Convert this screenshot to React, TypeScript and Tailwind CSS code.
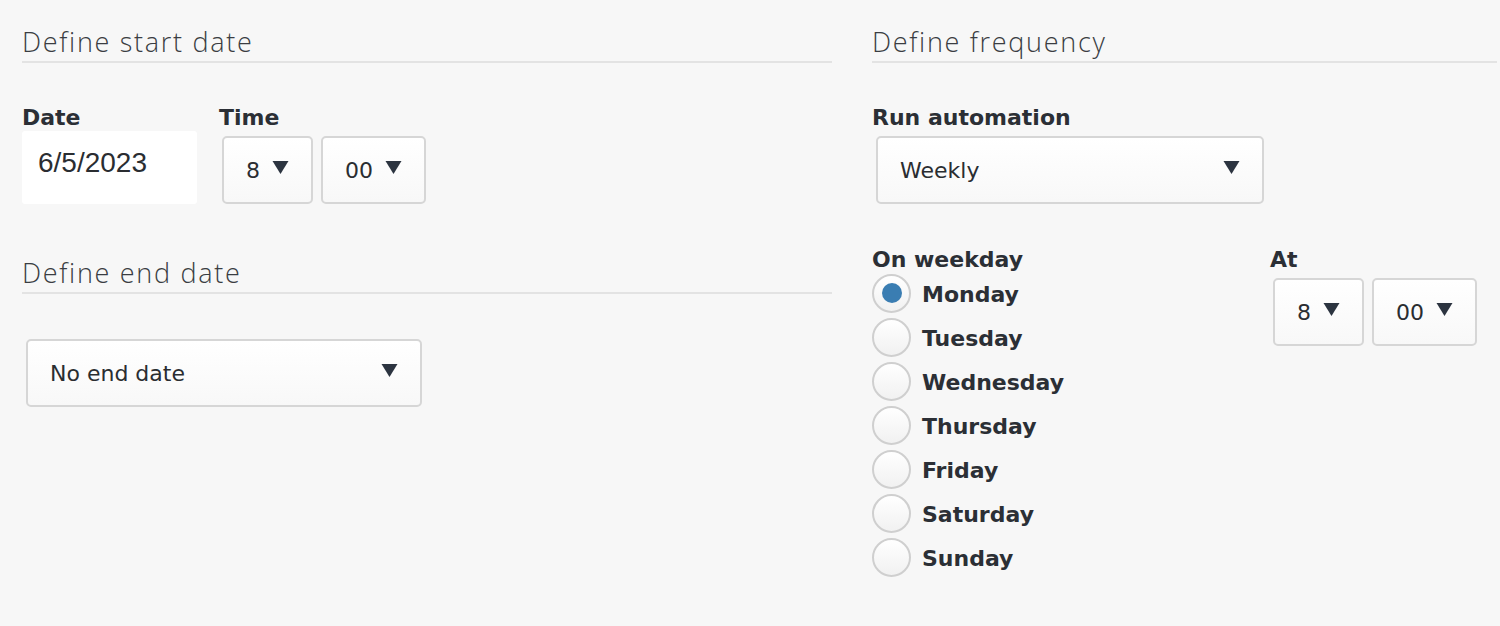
import React from 'react';

const LABEL = "font-['DejaVu_Sans',sans-serif] font-bold text-[22px] leading-[24px] text-[#2b2f35]";
const HEAD = "font-['Open_Sans',sans-serif] font-light text-[27px] leading-[33px] tracking-[1.7px] text-[#3a3d42]";

function Caret() {
  return (
    <svg width="17" height="14" viewBox="0 0 17 14" className="shrink-0 -mt-[6px]">
      <path d="M0.5 1h16L8.5 14z" fill="#2c3440" />
    </svg>
  );
}

function Select({ value, className = '' }: { value: string; className?: string }) {
  return (
    <div
      className={`h-[68px] flex items-center gap-3 px-[22px] rounded-[5px] border-2 border-[#d6d6d6] bg-gradient-to-b from-white to-[#f8f8f8] font-['DejaVu_Sans',sans-serif] text-[22px] text-[#2a2d31] ${className}`}
    >
      <span>{value}</span>
      <Caret />
    </div>
  );
}

function Heading({ children }: { children: React.ReactNode }) {
  return <div className={`${HEAD} pb-[3px] border-b-2 border-[#e3e3e3]`}>{children}</div>;
}

const days = ['Monday', 'Tuesday', 'Wednesday', 'Thursday', 'Friday', 'Saturday', 'Sunday'];

export default function App() {
  return (
    <div className="min-h-[626px] bg-[#f7f7f7] flex gap-[40px] pl-[22px] pr-[3px] pt-[25px]">
      {/* left column */}
      <div className="w-[810px] flex flex-col">
        <Heading>Define start date</Heading>
        <div className="mt-[43px] flex items-end gap-[22px]">
          <div className="flex flex-col">
            <div className={LABEL}>Date</div>
            <div className="mt-px w-[175px] h-[73px] bg-white rounded-[3px] pl-[16px] pt-[15px] font-['Liberation_Sans',sans-serif] text-[28px] leading-[34px] text-[#2a2d31]">
              6/5/2023
            </div>
          </div>
          <div className="flex flex-col">
            <div className={LABEL}>Time</div>
            <div className="mt-[6px] ml-[3px] flex gap-[8px]">
              <Select value="8" />
              <Select value="00" />
            </div>
          </div>
        </div>
        <div className="mt-[52px]">
          <Heading>Define end date</Heading>
        </div>
        <div className="mt-[45px] ml-[4px]">
          <Select value="No end date" className="w-[396px] justify-between" />
        </div>
      </div>

      {/* right column */}
      <div className="flex-1 flex flex-col">
        <Heading>Define frequency</Heading>
        <div className={`mt-[43px] ${LABEL}`}>Run automation</div>
        <div className="mt-[6px] ml-[4px]">
          <Select value="Weekly" className="w-[388px] justify-between" />
        </div>
        <div className="mt-[44px] flex">
          <div className="w-[398px] flex flex-col">
            <div className={LABEL}>On weekday</div>
            <div className="flex flex-col -mt-px">
              {days.map((d, i) => (
                <div key={d} className="h-[44px] flex items-center gap-[11px]">
                  <div className="w-[39px] h-[39px] rounded-full border-2 border-[#cfcfcf] bg-gradient-to-b from-white to-[#f1f1f1] flex items-center justify-center">
                    {i === 0 && <div className="w-[20px] h-[20px] rounded-full bg-[#3a7db2]" />}
                  </div>
                  <span className={`${LABEL} pt-[3px]`}>{d}</span>
                </div>
              ))}
            </div>
          </div>
          <div className="flex flex-col">
            <div className={LABEL}>At</div>
            <div className="mt-[6px] ml-[3px] flex gap-[8px]">
              <Select value="8" />
              <Select value="00" />
            </div>
          </div>
        </div>
      </div>
    </div>
  );
}
